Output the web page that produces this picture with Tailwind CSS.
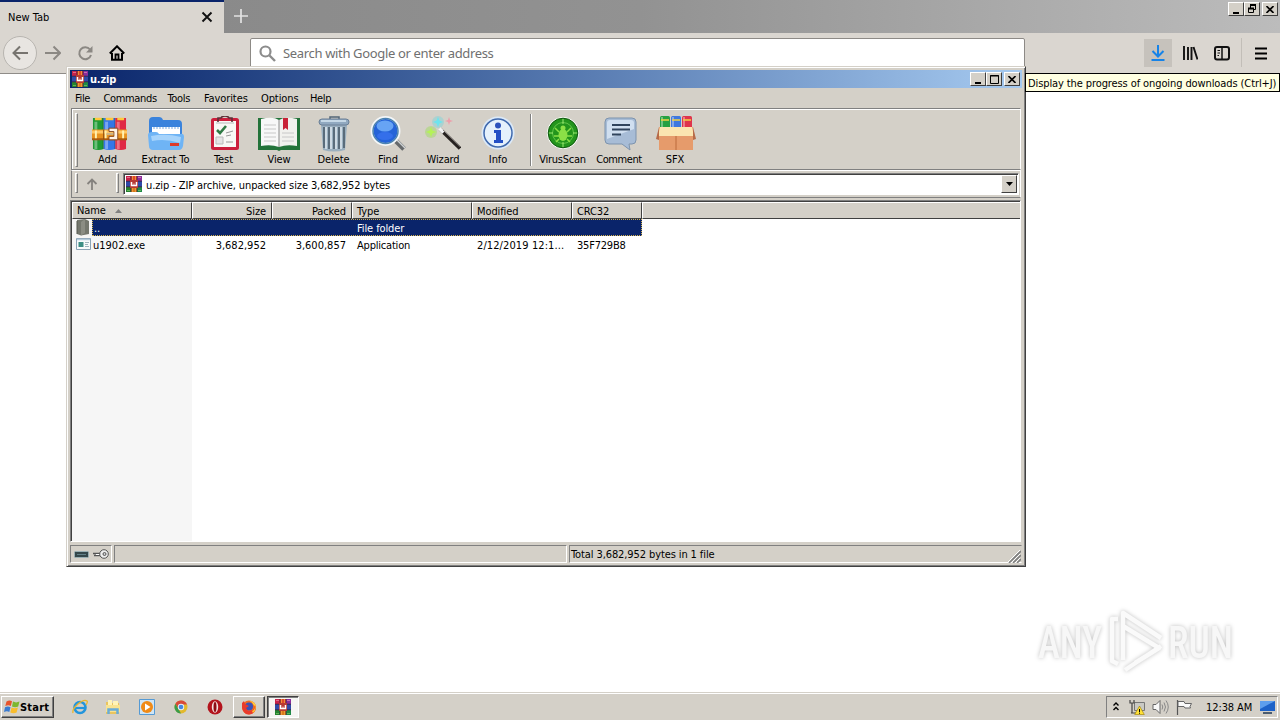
<!DOCTYPE html>
<html lang="en">
<head>
    <meta charset="UTF-8">
    <meta name="viewport" content="width=device-width, initial-scale=1.0">
    <title>u.zip</title>
    <script src="https://cdn.jsdelivr.net/npm/@tailwindcss/browser@4"></script>
</head>
<body class="relative flex h-[720px] w-[1280px] flex-col overflow-hidden bg-white font-['DejaVu_Sans_Condensed','DejaVu_Sans',sans-serif] text-[11px] leading-[13px] tracking-[-0.1px] text-black [font-stretch:condensed]">

    <!-- shared icons -->
    <svg class="hidden">
        <symbol id="rar" viewBox="0 0 36 36">
            <path d="M1 2h11v32q-5 2-11 0z" fill="#1f9a35"/>
            <path d="M12 2h12v32q-6 2-12 0z" fill="#3477e8"/>
            <path d="M24 2h11v32q-5 2-11 0z" fill="#e02845"/>
            <path d="M4 6v28M15 6v28M27 6v28" stroke="#fff" stroke-opacity=".35" stroke-width="3"/>
            <path d="M11.500 2v32M23.500 2v32" stroke="#000" stroke-opacity=".25"/>
            <path d="M3 3h7M14 3h8M26 3h7" stroke="#ffc83c" stroke-width="2.500"/>
            <path d="M0 14h36v10H0z" fill="#e8921e"/>
            <path d="M0 15h36v3H0z" fill="#ffc765"/>
            <path d="M0 23h36v2H0z" fill="#a85a10"/>
            <path d="M4 15v8M14 15v8M32 15v8" stroke="#fff2b0" stroke-width="2"/>
            <path d="M12 14v10" stroke="#8a4a10"/>
            <path d="M17.500 12.500h9v12h-9v-3.500h5v-5h-5z" fill="#fff4e8" stroke="#8a4a20"/>
            <path d="M15 18.500h7" stroke="#c9b38a" stroke-width="2"/>
        </symbol>
        <symbol id="rar-small" viewBox="0 0 16 16">
            <path d="M0 0h5v5H0z" fill="#c8224a"/>
            <path d="M5 0h6v5H5z" fill="#e0452b"/>
            <path d="M11 0h5v5h-5z" fill="#8c2c9c"/>
            <path d="M0 5h16v6H0z" fill="#2f49a8"/>
            <path d="M0 11h5v5H0z" fill="#25832f"/>
            <path d="M5 11h6v5H5z" fill="#d97a1c"/>
            <path d="M11 11h5v5h-5z" fill="#1f8a46"/>
            <path d="M0 5.200h16M0 10.800h16M5 0v16M11 0v16" stroke="#3a2238" stroke-width=".8"/>
            <path d="M1 1.500h3M12 1.500h3" stroke="#f0a0b8" stroke-opacity=".6"/>
            <path d="M1 14.500h3M12 14.500h3" stroke="#8fd070" stroke-opacity=".6"/>
            <path d="M6.500 0v4M9.500 0v4M6.500 12v4M9.500 12v4" stroke="#f4a23c" stroke-opacity=".8"/>
            <path d="M4 4h8v8H4z" fill="#b83a34"/>
            <path d="M5.500 6v3.500h5V6" fill="none" stroke="#fff" stroke-width="1.500"/>
            <path d="M8 7.500v2" stroke="#fff" stroke-opacity=".7"/>
        </symbol>
        <symbol id="close" viewBox="0 0 8 7">
            <path d="M.5 0 7.500 7M7.500 0 .5 7" stroke="#000" stroke-width="1.600"/>
        </symbol>
    </svg>

    <!-- tab strip -->
    <div class="flex h-[33px] shrink-0 bg-linear-to-r from-[#868686] via-[#929292] to-[#bcbcbc]">
        <div class="flex w-[224px] items-center border-t-2 border-[#0a246a] bg-[#dad6d0] pr-[11px] pl-2">
            <span class="flex-1 pb-px tracking-normal">New Tab</span>
            <svg class="mb-px h-3 w-3" viewBox="0 0 12 12"><path d="M1.500 1.500 10.500 10.500M10.500 1.500 1.500 10.500" stroke="#111" stroke-width="1.900"/></svg>
        </div>
        <svg class="mt-[9px] ml-[10px] h-[14px] w-[14px]" viewBox="0 0 14 14"><path d="M7 0v14M0 7h14" stroke="#e2e2e2" stroke-width="1.700"/></svg>
        <div class="mt-[2px] mr-[2px] ml-auto flex h-[14px]">
            <div class="flex w-4 items-center justify-center border border-t-white border-r-[#404040] border-b-[#404040] border-l-white bg-[#d4d0c8]"><svg class="h-[9px] w-[10px]" viewBox="0 0 10 9"><path d="M2 8h6" stroke="#000" stroke-width="2"/></svg></div>
            <div class="flex w-4 items-center justify-center border border-t-white border-r-[#404040] border-b-[#404040] border-l-white bg-[#d4d0c8]"><svg class="h-[10px] w-[10px]" viewBox="0 0 10 10"><path d="M3.500 4V1.500h5v4H7" fill="none" stroke="#000"/><path d="M3 1h6" stroke="#000" stroke-width="2"/><path d="M1.500 4.500h5v4h-5z" fill="none" stroke="#000"/><path d="M1 4.500h6" stroke="#000" stroke-width="2"/></svg></div>
            <div class="ml-[2px] flex w-4 items-center justify-center border border-t-white border-r-[#404040] border-b-[#404040] border-l-white bg-[#d4d0c8]"><svg class="h-[7px] w-2"><use href="#close"/></svg></div>
        </div>
    </div>

    <!-- navigation toolbar -->
    <div class="flex h-[41px] shrink-0 border-b border-[#8f8c88] bg-[#dad6d0]">
        <svg class="mt-[2px] ml-[2px] h-9 w-9" viewBox="0 0 36 36"><circle cx="18" cy="18" r="16.500" fill="#e8e5e1" stroke="#b8b5b0"/><path d="M26 18H11.500M18 11.500 11.500 18l6.500 6.500" fill="none" stroke="#77746f" stroke-width="2"/></svg>
        <svg class="mt-[12px] ml-[7px] h-4 w-4" viewBox="0 0 16 16"><path d="M0 8h14.500M8.500 1.500 15 8l-6.500 6.500" fill="none" stroke="#8b8883" stroke-width="2"/></svg>
        <svg class="mt-[12px] ml-4 h-4 w-4" viewBox="0 0 16 16"><path d="M13 4.500A6 6 0 1 0 14 10" fill="none" stroke="#8b8883" stroke-width="2"/><path d="M15.500 1v6.500H9z" fill="#8b8883"/></svg>
        <svg class="mt-[12px] ml-4 h-4 w-4" viewBox="0 0 16 16"><path d="M.8 8.500 8 1.300l7.200 7.200M3 8v6.800h10V8" fill="none" stroke="#000" stroke-width="2"/><path d="M6.500 14V9.500h3V14" fill="none" stroke="#000" stroke-width="1.800"/></svg>
        <div class="mt-[5px] ml-[125px] flex h-8 w-[775px] items-start rounded-t-[2px] border border-[#8d8a86] bg-white pt-[6px] pl-[8px]">
            <svg class="h-[17px] w-[17px]" viewBox="0 0 17 17"><circle cx="6.500" cy="6.500" r="5" fill="none" stroke="#8c8c8c" stroke-width="2.200"/><path d="m10.500 10.500 5.500 5.500" stroke="#8c8c8c" stroke-width="2.400"/></svg>
            <span class="ml-[7px] font-['Noto_Sans',sans-serif] text-[13px] leading-[16px] tracking-[-0.34px] text-[#707070]">Search with Google or enter address</span>
        </div>
        <div class="mt-[6px] ml-[119px] flex h-7 w-7 items-center justify-center bg-[#c6c2bc]">
            <svg class="h-4 w-4" viewBox="0 0 16 16"><path d="M8 0v11M2.500 6 8 11.500 13.500 6M1.500 15h13" fill="none" stroke="#1683e8" stroke-width="2"/></svg>
        </div>
        <svg class="mt-[13px] ml-[11px] h-[14px] w-[15px]" viewBox="0 0 15 14"><path d="M1 0v14M5 1v13M8.500 1v13M10.500 1l4 12.500" stroke="#111" stroke-width="1.900"/></svg>
        <svg class="mt-[13px] ml-4 h-[15px] w-4" viewBox="0 0 16 15"><rect x="1" y="1" width="14" height="12.500" rx="2" fill="none" stroke="#111" stroke-width="2"/><path d="M8 1v12" stroke="#111" stroke-width="1.500"/><path d="M3.500 4.500h2.500M3.500 7h2.500M3.500 9.500h1.500" stroke="#111"/></svg>
        <div class="mt-[5px] ml-[11px] h-[29px] w-px bg-[#c2beb8]"></div>
        <svg class="mt-[14px] ml-[13px] h-[13px] w-3" viewBox="0 0 12 13"><path d="M0 1.500h12M0 6.500h12M0 11.500h12" stroke="#000" stroke-width="2"/></svg>
    </div>

    <main class="flex-1"></main>

    <!-- taskbar -->
    <footer class="flex h-[28px] shrink-0 border-t border-[#d4d0c8] bg-[#d4d0c8] pt-px shadow-[inset_0_1px_0_#fff]">
        <div class="mt-[2px] ml-px flex h-[22px] w-[53px] items-center border border-t-white border-r-[#404040] border-b-[#404040] border-l-white pl-[2px] shadow-[inset_-1px_-1px_0_#808080]">
            <svg class="h-4 w-4" viewBox="0 0 16 16"><path d="M2.500 2.500q3-2 5.500-.3L6.800 7Q4.500 5.500 1.300 7z" fill="#e8532a"/><path d="M9 2.600q3 1.600 6.500 0L14.200 7.500q-3 1.500-6.200 0z" fill="#7db72f"/><path d="M1 8.200q3-1.500 5.500 0L5.300 13Q3 11.500 0 13z" fill="#3a7bd0"/><path d="M7.600 8.500q3 1.500 6.300 0l-1.300 5q-3 1.500-6.300 0z" fill="#f9bd2c"/></svg>
            <span class="font-bold tracking-[0.2px]">Start</span>
        </div>
        <svg class="mt-[5px] ml-[18px] h-4 w-4" viewBox="0 0 16 16"><circle cx="8" cy="8.500" r="5.500" fill="none" stroke="#2395dc" stroke-width="2.600"/><path d="M4 9h10" stroke="#2395dc" stroke-width="2.200"/><path d="M1 14Q0 10 6 5t9-3q1 1-1 4" fill="none" stroke="#e9b52c" stroke-width="1.300"/></svg>
        <svg class="mt-[5px] ml-[17px] h-4 w-4" viewBox="0 0 16 16"><path d="M1 3h5l1 1h7v11H1z" fill="#e9c45e"/><path d="M3 1h4v5H3zM8 2h5v4H8z" fill="#fff4b8"/><path d="M1 6h14v7H1z" fill="#f8e391"/><path d="M3.500 15v-4.500h9V15" fill="none" stroke="#68acd8" stroke-width="2.500"/></svg>
        <svg class="mt-[5px] ml-[18px] h-4 w-4" viewBox="0 0 16 16"><path d="M.5.500h15v15H.500z" fill="#cfe5f5" stroke="#559ad4"/><circle cx="8" cy="8" r="6" fill="#f08a16"/><path d="m6 4.500 5.500 3.500L6 11.500z" fill="#fff"/></svg>
        <svg class="mt-[5px] ml-[18px] h-4 w-4" viewBox="0 0 16 16"><circle cx="8" cy="8" r="6.500" fill="#e3b92c"/><path d="M2.400 4.700A6.500 6.500 0 0 1 14 5.500H8L5 9z" fill="#d8493a"/><path d="M2.400 4.700 6 11l2 3.500A6.500 6.500 0 0 1 2.400 4.700z" fill="#3a9b4a"/><circle cx="8" cy="8" r="3.200" fill="#e8f0fa"/><circle cx="8" cy="8" r="2.300" fill="#4687e0"/></svg>
        <svg class="mt-[5px] ml-[18px] h-4 w-4" viewBox="0 0 16 16"><circle cx="8" cy="8" r="7.500" fill="#b3131c"/><ellipse cx="8" cy="8" rx="3.200" ry="5.800" fill="#f4e2e0"/><ellipse cx="8" cy="8" rx="1.500" ry="5" fill="#8e0c14"/></svg>
        <div class="mt-[2px] ml-[10px] flex h-[22px] w-8 items-center justify-center border border-t-white border-r-[#404040] border-b-[#404040] border-l-white shadow-[inset_-1px_-1px_0_#808080]">
            <svg class="h-4 w-4" viewBox="0 0 16 16"><circle cx="8" cy="8.500" r="7" fill="#f26a20"/><path d="M8 1.500q6 1 7 6-1-1-2-1l-2-3z" fill="#ffd23e"/><circle cx="8" cy="7.500" r="4" fill="#3a52b8"/><path d="M1 4l2-2 1 3 4 2-3 2 2 3 5-1 3-4q0 8-7 8.500Q0 15 1 4z" fill="#e93a2c"/><path d="M11 12q4-2 3-7 2 6-2 9z" fill="#ffc12e"/></svg>
        </div>
        <div class="mt-[2px] ml-[2px] flex h-[22px] w-8 items-center justify-center border border-t-[#404040] border-r-white border-b-white border-l-[#404040] bg-[#f6f5f3] shadow-[inset_1px_1px_0_#808080]">
            <svg class="h-4 w-4"><use href="#rar-small"/></svg>
        </div>

        <div class="mt-[2px] mr-[2px] ml-auto flex h-[22px] w-[172px] border border-t-[#808080] border-r-white border-b-white border-l-[#808080]">
            <svg class="mt-[5px] ml-[6px] h-[9px] w-[6px]" viewBox="0 0 6 9"><path d="m.5 3.500 2.500-2.500 2.500 2.500M.500 8 3 5.500 5.500 8" fill="none" stroke="#000" stroke-width="1.400"/></svg>
            <svg class="mt-[2px] ml-[10px] h-4 w-4" viewBox="0 0 16 16"><path d="M5.500 3.500h10v8h-10z" fill="#c9c9c4" stroke="#777"/><path d="M1 1v3h4V1M3 4v10M2 14h5" fill="none" stroke="#444" stroke-width="1.200"/><path d="m10.500 7 4.800 8.500H5.700z" fill="#ffe137" stroke="#9a7a00" stroke-width=".6"/><path d="M10.500 10v3M10.500 13.700v1" stroke="#000"/></svg>
            <svg class="mt-[2px] ml-[7px] h-4 w-[17px]" viewBox="0 0 17 16"><path d="M1 5.500h3L8 1.500v13L4 10.500H1z" fill="#f8f8f8" stroke="#666"/><path d="M10 5.500q1.500 2.500 0 5M12 3.500q3 4.500 0 9M14 1.500q4.500 6.500 0 13" fill="none" stroke="#888"/></svg>
            <svg class="mt-[2px] ml-[7px] h-4 w-[17px]" viewBox="0 0 17 16"><path d="M1.500 1v15" stroke="#555" stroke-width="1.200"/><path d="M2 2.500h6l1 2h6.500l-1.500 3 .5 1.500H9l-1-1.500H2z" fill="#fafafa" stroke="#666"/></svg>
            <span class="mt-1 ml-[13px] w-[47px] whitespace-nowrap">12:38 AM</span>
            <svg class="mt-1 ml-[7px] h-[13px] w-[15px]" viewBox="0 0 15 13"><path d="M0 0h15v10H0z" fill="#1d62c8"/><path d="M0 0h15L0 8z" fill="#5d9eed"/><path d="M3 12h9" stroke="#4b5c70" stroke-width="2"/></svg>
        </div>
    </footer>

    <!-- watermark -->
    <svg class="absolute top-[602px] left-[1032px] h-[76px] w-[220px] drop-shadow-[0_0_2px_rgba(0,0,0,0.25)]" viewBox="0 -2 220 76">
        <text x="6" y="54" textLength="64" lengthAdjust="spacingAndGlyphs" fill="#f7f7f7" font-family="Roboto, sans-serif" font-size="45" font-weight="500" letter-spacing="0">ANY</text>
        <text x="136" y="54" textLength="65" lengthAdjust="spacingAndGlyphs" fill="#f7f7f7" font-family="Roboto, sans-serif" font-size="45" font-weight="500" letter-spacing="0">RUN</text>
        <path d="M86 15h-6v42l6 3M91 56V9l38 25M91 22l36 22-24 15M93 66l36-24" fill="none" stroke="#fafafa" stroke-width="4.500" stroke-linejoin="round"/>
    </svg>

    <!-- archive window -->
    <section class="absolute top-[66px] left-[66px] flex h-[501px] w-[960px] flex-col border border-t-[#d4d0c8] border-r-[#404040] border-b-[#404040] border-l-[#d4d0c8] bg-[#d4d0c8] p-[3px] shadow-[inset_1px_1px_0_#fff,inset_-1px_-1px_0_#808080]">
        <div class="flex h-[18px] shrink-0 items-center bg-linear-to-r from-[#0a246a] to-[#a6caf0] pr-[2px] pl-[2px] text-white">
            <svg class="h-4 w-4"><use href="#rar-small"/></svg>
            <span class="ml-[2px] flex-1 font-bold tracking-[-0.2px]">u.zip</span>
            <div class="flex h-[14px]">
                <div class="flex w-4 items-center justify-center border border-t-white border-r-[#404040] border-b-[#404040] border-l-white bg-[#d4d0c8]"><svg class="h-[9px] w-[10px]" viewBox="0 0 10 9"><path d="M2 8h6" stroke="#000" stroke-width="2"/></svg></div>
                <div class="flex w-4 items-center justify-center border border-t-white border-r-[#404040] border-b-[#404040] border-l-white bg-[#d4d0c8]"><svg class="h-[9px] w-[9px]" viewBox="0 0 9 9"><path d="M.5.500h8v8h-8zM0 1h9" fill="none" stroke="#000"/></svg></div>
                <div class="ml-[2px] flex w-4 items-center justify-center border border-t-white border-r-[#404040] border-b-[#404040] border-l-white bg-[#d4d0c8]"><svg class="h-[7px] w-2"><use href="#close"/></svg></div>
            </div>
        </div>

        <nav class="flex h-5 shrink-0 items-center pl-[5px] tracking-[-0.35px] whitespace-nowrap">
            <span class="w-[28.500px]">File</span>
            <span class="w-16">Commands</span>
            <span class="w-[36.500px]">Tools</span>
            <span class="w-[57px] tracking-[-0.1px]">Favorites</span>
            <span class="w-[49px] tracking-[-0.1px]">Options</span>
            <span>Help</span>
        </nav>

        <div class="mx-px flex h-[62px] shrink-0 border border-[#808080] border-r-white border-b-[#808080] pt-[3px] pl-[3px] shadow-[inset_1px_1px_0_#fff]">
            <div class="mt-px h-[54px] w-[3px] border border-t-white border-r-[#808080] border-b-[#808080] border-l-white"></div>
            <div class="ml-[2px] flex text-center whitespace-nowrap [&_svg]:mx-auto [&_svg]:mt-[4px] [&_svg]:h-9 [&_svg]:w-9 [&_span]:mt-px [&_span]:block">
                <div class="w-[55px]">
                    <svg class="translate-x-px"><use href="#rar" x="1" y="0" width="35" height="35"/></svg>
                    <span>Add</span>
                </div>
                <div class="w-[61px]">
                    <svg viewBox="0 0 36 36"><path d="M1 5q0-4 4-4h6q3 0 4 3h15q4 0 4 4v12H1z" fill="#3a83dc"/><path d="M4 11h28v10H4z" fill="#fff"/><path d="M5 12h26" stroke="#bcd4ee" stroke-dasharray="2 1" stroke-width="2"/><path d="M0 19q0-3 4-3h4q2 0 3 2h21q4-1 4 3l-1 9q-1 4-4 4H5q-4 0-4-4z" fill="#6fb4f5"/><path d="M3 20q15-3 30 1l-1 6q-15-5-28-2z" fill="#a6d3fb"/><path d="M22 27h9v3h-9z" fill="#dd3a2c"/></svg>
                    <span>Extract To</span>
                </div>
                <div class="w-[55px]">
                    <svg viewBox="0 0 36 36"><rect x="5" y="2" width="28" height="32" rx="2.500" fill="#cc1f3c"/><path d="M8 5h22v26H8z" fill="#f8f8f5"/><path d="M12 6V2h3q1-2 4-2t4 2h3v4" fill="none" stroke="#5d3038" stroke-width="1.600"/><path d="M10 7h18" stroke="#d8d8d8" stroke-width="2"/><path d="m11 14 3 3 6-7" fill="none" stroke="#2f7a44" stroke-width="2.600"/><path d="m20 17 7-2M20 20l5-1M20 26h7" stroke="#999"/><path d="M10 21h7v7h-7z" fill="#e4e4e4" stroke="#bbb"/></svg>
                    <span>Test</span>
                </div>
                <div class="w-[56px]">
                    <svg class="!w-[42px]" viewBox="0 0 42 36"><path d="M0 2h42v32H23l-2 1-2-1H0z" fill="#23733a"/><path d="M3 3q12-3 18 1v27q-8-3-18-1z" fill="#f8f8f8"/><path d="M39 3q-12-3-18 1v27q8-3 18-1z" fill="#f1f1ee"/><path d="M6 9h12M6 13h12M6 17h12M6 21h12M6 25h12M24 17h12M24 21h12M24 25h12" stroke="#c8c8c8"/><path d="M21 4v27" stroke="#8b8b8b"/><path d="M25 2h5v12l-2.500-2-2.500 2z" fill="#c92237"/></svg>
                    <span>View</span>
                </div>
                <div class="w-[53px]">
                    <svg viewBox="0 0 36 36"><path d="M14 4V1h9v3" fill="none" stroke="#536677" stroke-width="1.500"/><path d="M5 9h26l-2 25q-11 3-22 0z" fill="#9aafbf"/><path d="M8 11v21M13 11v22M18 11v22M23 11v22M28 11v21" stroke="#5a6c7b" stroke-width="2"/><path d="M10 11v22M15 11v22M20 11v22M25 11v22" stroke="#e0e9ef" stroke-width="1.500"/><rect x="3" y="3" width="30" height="6" rx="3" fill="#91a9c0" stroke="#6a7f96"/><path d="M5 5h25" stroke="#d9e8f3" stroke-width="1.500"/></svg>
                    <span>Delete</span>
                </div>
                <div class="w-[56px]">
                    <svg viewBox="0 0 36 36"><path d="m25 24 9 9" stroke="#66696b" stroke-width="5"/><path d="m27 24 8 8" stroke="#d0d3d5" stroke-width="1.500"/><circle cx="15.500" cy="15" r="13.500" fill="#2463d8" stroke="#f3f6f8" stroke-width="3"/><circle cx="15.500" cy="15" r="12.500" fill="none" stroke="#4b83b0" stroke-width="1.500"/><ellipse cx="15" cy="10" rx="8.500" ry="5.500" fill="#67a4f4"/><ellipse cx="15" cy="20" rx="8" ry="4" fill="#346fea"/></svg>
                    <span>Find</span>
                </div>
                <div class="w-[54px]">
                    <svg viewBox="0 0 36 36"><circle cx="13" cy="6" r="6" fill="#4fd6e6" opacity=".3"/><circle cx="6" cy="16" r="6" fill="#8ce038" opacity=".35"/><path d="m13 1 1.500 3.500L18 6l-3.500 1.500L13 11l-1.500-3.500L8 6l3.500-1.500z" fill="#6ee4ee"/><path d="m6 11 1.500 3.500L11 16l-3.500 1.500L6 21l-1.500-3.500L1 16l3.500-1.500z" fill="#b4f258"/><path d="m24 1 1 3 3 1-3 1-1 3-1-3-3-1 3-1z" fill="#ed9eab"/><path d="m15 13 20 19.500" stroke="#272220" stroke-width="3.500"/><path d="m14.500 12.500 4 4" stroke="#f2f2f2" stroke-width="3.500"/><path d="m18 14 17 16.500" stroke="#8b8683"/></svg>
                    <span>Wizard</span>
                </div>
                <div class="w-[56px]">
                    <svg viewBox="0 0 36 36"><circle cx="18" cy="17" r="16.500" fill="#dbe9f8"/><circle cx="18" cy="17" r="14" fill="#e5f1fc" stroke="#3e68ad" stroke-width="1.500"/><circle cx="18" cy="9.500" r="3" fill="#2c52bc"/><path d="M14 14h7v10h2v3h-9v-3h2v-7h-2z" fill="#2450c5"/></svg>
                    <span>Info</span>
                </div>
                <div class="mt-[2px] mr-[2px] ml-[4px] h-[52px] w-[2px] border-r border-l border-r-white border-l-[#808080]"></div>
                <div class="w-[57px]">
                    <svg viewBox="0 0 36 36"><circle cx="18" cy="17" r="16" fill="#f5faf3"/><circle cx="18" cy="17" r="14.800" fill="#23951c" stroke="#10580f"/><circle cx="18" cy="17" r="10.500" fill="none" stroke="#8be466" stroke-opacity=".6"/><path d="M18 3v5M18 26v5M4 17h4M28 17h4" stroke="#9dea70"/><ellipse cx="18" cy="19" rx="4.500" ry="6" fill="#8be046"/><circle cx="18" cy="12" r="2.500" fill="#8be046"/><path d="m14 16-4-4M22 16l4-4M14 20H9M22 20h5M14 23l-3 3M22 23l3 3" stroke="#8be046" stroke-width="1.500"/></svg>
                    <span class="tracking-[-0.25px]">VirusScan</span>
                </div>
                <div class="w-[56px]">
                    <svg class="translate-x-px" viewBox="0 0 36 36"><path d="M7 2h23q4 0 4 4v18q0 4-4 4h-3l1 6-8-6H7q-4 0-4-4V6q0-4 4-4z" fill="#a7bcd6" stroke="#7d93ad"/><path d="M8 4h21q3 0 3 3v6L5 23V7q0-3 3-3z" fill="#d0dff0"/><path d="M10 9h18M10 13.500h18M10 18.500h9" stroke="#30445d" stroke-width="1.800"/></svg>
                    <span class="tracking-[-0.4px]">Comment</span>
                </div>
                <div class="w-[56px]">
                    <svg class="!w-10 translate-x-px" viewBox="0 0 40 36"><rect x="4" y="0" width="10" height="15" rx="1.500" fill="#27a142"/><rect x="15" y="0" width="10" height="15" rx="1.500" fill="#3f78df"/><rect x="26" y="0" width="10" height="15" rx="1.500" fill="#df344b"/><path d="M6 1v10M17 1v10M28 1v10" stroke="#fff" stroke-opacity=".35" stroke-width="2"/><path d="M5 4h8M16 4h8M27 4h8" stroke="#f4cf42" stroke-width="1.500"/><path d="M3 11h34v23H3z" fill="#e69b6b"/><path d="M20 20v14" stroke="#bc6b3c"/><path d="M4 11h32l2 9H2z" fill="#fbe5b0"/><path d="M3 11 0 23l3 1zM37 11l3 12-3 1z" fill="#b76b48"/></svg>
                    <span>SFX</span>
                </div>
            </div>
        </div>

        <div class="mx-px flex h-[28px] shrink-0 border border-t-white border-r-white border-b-[#808080] border-l-[#808080] pt-px pl-[3px]">
            <div class="mt-px h-5 w-[3px] border border-t-white border-r-[#808080] border-b-[#808080] border-l-white"></div>
            <svg class="mt-[6px] ml-[8px] h-3 w-3" viewBox="0 0 12 12"><path d="M6 12V2M1.500 6 6 1.500 10.500 6" fill="none" stroke="#85827e" stroke-width="1.800"/></svg>
            <div class="mt-px ml-[18px] h-5 w-[3px] border border-t-white border-r-[#808080] border-b-[#808080] border-l-white"></div>
            <div class="mt-px ml-[4px] flex h-[22px] w-[896px] items-center border border-t-[#808080] border-r-white border-b-white border-l-[#808080] bg-white pr-px pl-[2px] shadow-[inset_1px_1px_0_#404040]">
                <svg class="h-4 w-4"><use href="#rar-small"/></svg>
                <span class="mt-[3px] ml-[4px] flex-1">u.zip - ZIP archive, unpacked size 3,682,952 bytes</span>
                <div class="flex h-[18px] w-4 items-center justify-center border border-t-white border-r-[#404040] border-b-[#404040] border-l-white bg-[#d4d0c8]"><svg class="h-1 w-[7px]" viewBox="0 0 7 4"><path d="M0 0h7L3.500 4z"/></svg></div>
            </div>
        </div>

        <!-- file list -->
        <div class="mt-[2px] mr-px flex h-[342px] shrink-0 flex-col border border-t-[#808080] border-r-white border-b-white border-l-[#808080] bg-[linear-gradient(90deg,#f6f6f6_121px,#fff_121px)] whitespace-nowrap shadow-[inset_1px_1px_0_#404040]">
            <div class="ml-px mt-px flex h-[17px] shrink-0 bg-[#d4d0c8] [&>div]:border [&>div]:border-t-white [&>div]:border-r-[#404040] [&>div]:border-b-[#404040] [&>div]:border-l-white [&>div]:pr-[5px] [&>div]:pl-1 [&>div]:leading-[18px]">
                <div class="flex w-[120px] items-center"><span class="pt-px leading-[16px]">Name</span><svg class="ml-[9px] h-1 w-[7px]" viewBox="0 0 7 4"><path d="M0 4h7L3.500 0z" fill="#808080"/></svg></div>
                <div class="w-20 text-right">Size</div>
                <div class="w-20 text-right">Packed</div>
                <div class="w-[120px]">Type</div>
                <div class="w-[100px]">Modified</div>
                <div class="w-[70px]">CRC32</div>
                <div class="flex-1 !border-r-0"></div>
            </div>
            <div class="ml-px flex h-[17px] shrink-0">
                <svg class="ml-1 h-[17px] w-4" viewBox="0 0 16 17"><path d="M1 1 9 0l4 2v13l-8 1.500L1 15z" fill="#74776e"/><path d="M9 0v14l-4 2.500V3z" fill="#8b8d84"/><path d="M1 2v13" stroke="#55584f"/></svg>
                <div class="flex w-[550px] border border-dotted border-[#d5b24c] bg-[#0a246a] leading-[18px] text-white">
                    <span class="h-[15px] w-[264px] pl-px">..</span>
                    <span class="h-[15px]">File folder</span>
                </div>
            </div>
            <div class="ml-px flex h-[17px] shrink-0 leading-[20px]">
                <svg class="mt-px ml-1 h-4 w-4" viewBox="0 0 16 16"><path d="M.5 1.500h14v11H.500z" fill="#f7fafb" stroke="#8ba3b5"/><path d="M1 2.500h13" stroke="#b4cbdc" stroke-width="1.500"/><path d="M2.500 5h5v5h-5z" fill="#3c8e84"/><path d="M9 5.500h4M9 7.500h3M9 9.500h4" stroke="#9fb3bd"/></svg>
                <span class="w-[100px] pl-[1px] tracking-normal">u1902.exe</span>
                <span class="w-20 pr-[6px] text-right tracking-normal">3,682,952</span>
                <span class="w-20 pr-[6px] text-right tracking-normal">3,600,857</span>
                <span class="w-[120px] pl-[5px] tracking-[-0.2px]">Application</span>
                <span class="w-[100px] pl-[5px] tracking-[0.1px]">2/12/2019 12:1...</span>
                <span class="w-[70px] pl-[5px] tracking-[-0.2px]">35F729B8</span>
            </div>
        </div>

        <!-- status bar -->
        <div class="mt-[3px] flex h-[18px] shrink-0 gap-[2px]">
            <div class="flex w-[42px] items-center gap-1 border border-t-[#808080] border-r-white border-b-white border-l-[#808080] pl-[3px]">
                <svg class="h-[7px] w-[15px]" viewBox="0 0 15 7"><rect x=".5" y=".5" width="14" height="6" rx="1" fill="#34474b" stroke="#9ab0b5"/><path d="M3 3.500h9" stroke="#638087"/></svg>
                <svg class="h-[10px] w-4" viewBox="0 0 16 10"><path d="M0 4.500h8M1 6.500h7" stroke="#555" stroke-width="1.300"/><path d="M3 5.500h5" stroke="#fff"/><circle cx="11" cy="5" r="4.300" fill="#eee" stroke="#555"/><circle cx="11.500" cy="5" r="1.500" fill="#ccc" stroke="#555"/></svg>
            </div>
            <div class="w-[453px] border border-t-[#808080] border-r-white border-b-white border-l-[#808080]"></div>
            <div class="relative flex-1 border border-t-[#808080] border-r-transparent border-b-white border-l-[#808080] pl-px leading-[17px]">Total 3,682,952 bytes in 1 file
                <svg class="absolute right-0 -bottom-px h-[13px] w-[13px]" viewBox="0 0 13 13"><path d="M1 13 13 1M5 13l8-8M9 13l4-4" stroke="#808080" stroke-width="1.600"/><path d="M0 12 12 0M4 12l8-8M8 12l4-4" stroke="#fff"/></svg>
            </div>
        </div>
    </section>

    <!-- tooltip -->
    <div class="absolute top-[73px] left-[1025px] flex h-[19px] w-[255px] items-center border border-black bg-[#ffffe1] pt-[2px] pl-[2px] whitespace-nowrap">Display the progress of ongoing downloads (Ctrl+J)</div>
</body>
</html>
